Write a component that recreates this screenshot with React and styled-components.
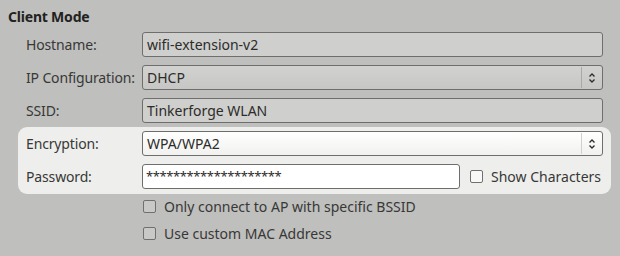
import styled, { createGlobalStyle } from 'styled-components';

const GlobalStyle = createGlobalStyle`
  html, body {
    margin: 0;
    padding: 0;
    background: #bfbfbd;
  }
  body {
    font-family: 'Noto Sans', 'Open Sans', sans-serif;
    font-size: 14px;
    color: #383836;
  }
`;

const Page = styled.div`
  width: 620px;
  height: 256px;
  background: #bfbfbd;
  box-sizing: border-box;
  padding: 7px 9px 0 8px;
  overflow: hidden;
`;

const Title = styled.div`
  font-weight: bold;
  font-size: 14px;
  line-height: 20px;
  letter-spacing: -0.2px;
  color: #222220;
  height: 25px;
`;

const Rows = styled.div`
  margin-left: 10px;
  display: flex;
  flex-direction: column;
  gap: 8px;
`;

const Group = styled.div`
  padding: 0 8px;
  display: flex;
  flex-direction: column;
  gap: 8px;
`;

const Panel = styled(Group)`
  background: #eeeeec;
  border-radius: 9px;
  padding: 4px 8px 5px;
  margin-top: -4px;
`;

const Row = styled.div`
  display: grid;
  grid-template-columns: 116px 1fr;
  align-items: center;
  height: 25px;
`;

const Label = styled.span`
  white-space: nowrap;
  letter-spacing: -0.15px;
`;

const Field = styled.div`
  box-sizing: border-box;
  height: 25px;
  border: 1px solid #6e6e6c;
  border-radius: 3px;
  padding: 0 4px;
  display: flex;
  align-items: center;
  white-space: nowrap;
  color: #2c2c2a;
  background: ${(p) => (p.$active ? '#ffffff' : '#cfcfcd')};
`;

const Combo = styled(Field)`
  padding-right: 0;
  background: ${(p) =>
    p.$active
      ? 'linear-gradient(#ffffff, #f1f1ef)'
      : 'linear-gradient(#d2d2d0, #c6c6c4)'};
`;

const ComboText = styled.span`
  flex: 1;
`;

const ComboButton = styled.span`
  width: 20px;
  height: 21px;
  border-left: 1px solid ${(p) => (p.$active ? '#d0d0ce' : '#a9a9a7')};
  display: flex;
  align-items: center;
  justify-content: center;
`;

const PasswordLine = styled.div`
  display: flex;
  align-items: center;
`;

const PasswordField = styled(Field)`
  width: 318px;
  padding-left: 3px;
`;

const Stars = styled.span`
  font-size: 13px;
  letter-spacing: -0.4px;
  position: relative;
  top: -1px;
`;

const CheckLabel = styled.label`
  display: flex;
  align-items: center;
  gap: 8px;
  white-space: nowrap;
  margin-left: ${(p) => p.$indent || 0}px;
`;

const Box = styled.span`
  box-sizing: border-box;
  width: 13px;
  height: 13px;
  border: 1px solid #707070;
  border-radius: 2px;
  background: ${(p) => (p.$light ? '#f8f8f7' : '#c9c9c7')};
`;

const Checks = styled.div`
  display: flex;
  flex-direction: column;
  gap: 8px;
  padding: 3px 0 0 135px;
`;

const CheckRow = styled.div`
  height: 19px;
  display: flex;
  align-items: center;
`;

const UpDown = () => (
  <svg width="8" height="12" viewBox="0 0 8 12">
    <path d="M1.5 4.5 L4 2 L6.5 4.5 M1.5 7.5 L4 10 L6.5 7.5" fill="none" stroke="#2e2e2e" strokeWidth="1.4" />
  </svg>
);

const App = () => (
  <Page>
    <GlobalStyle />
    <Title>Client Mode</Title>
    <Rows>
      <Group>
        <Row>
          <Label>Hostname:</Label>
          <Field>wifi-extension-v2</Field>
        </Row>
        <Row>
          <Label>IP Configuration:</Label>
          <Combo>
            <ComboText>DHCP</ComboText>
            <ComboButton><UpDown /></ComboButton>
          </Combo>
        </Row>
        <Row>
          <Label>SSID:</Label>
          <Field>Tinkerforge WLAN</Field>
        </Row>
      </Group>
      <Panel>
        <Row>
          <Label>Encryption:</Label>
          <Combo $active>
            <ComboText>WPA/WPA2</ComboText>
            <ComboButton $active><UpDown /></ComboButton>
          </Combo>
        </Row>
        <Row>
          <Label>Password:</Label>
          <PasswordLine>
            <PasswordField $active>
              <Stars>********************</Stars>
            </PasswordField>
            <CheckLabel $indent={10}>
              <Box $light />
              Show Characters
            </CheckLabel>
          </PasswordLine>
        </Row>
      </Panel>
    </Rows>
    <Checks>
      <CheckRow>
        <CheckLabel>
          <Box />
          Only connect to AP with specific BSSID
        </CheckLabel>
      </CheckRow>
      <CheckRow>
        <CheckLabel>
          <Box />
          Use custom MAC Address
        </CheckLabel>
      </CheckRow>
    </Checks>
  </Page>
);

export default App;
